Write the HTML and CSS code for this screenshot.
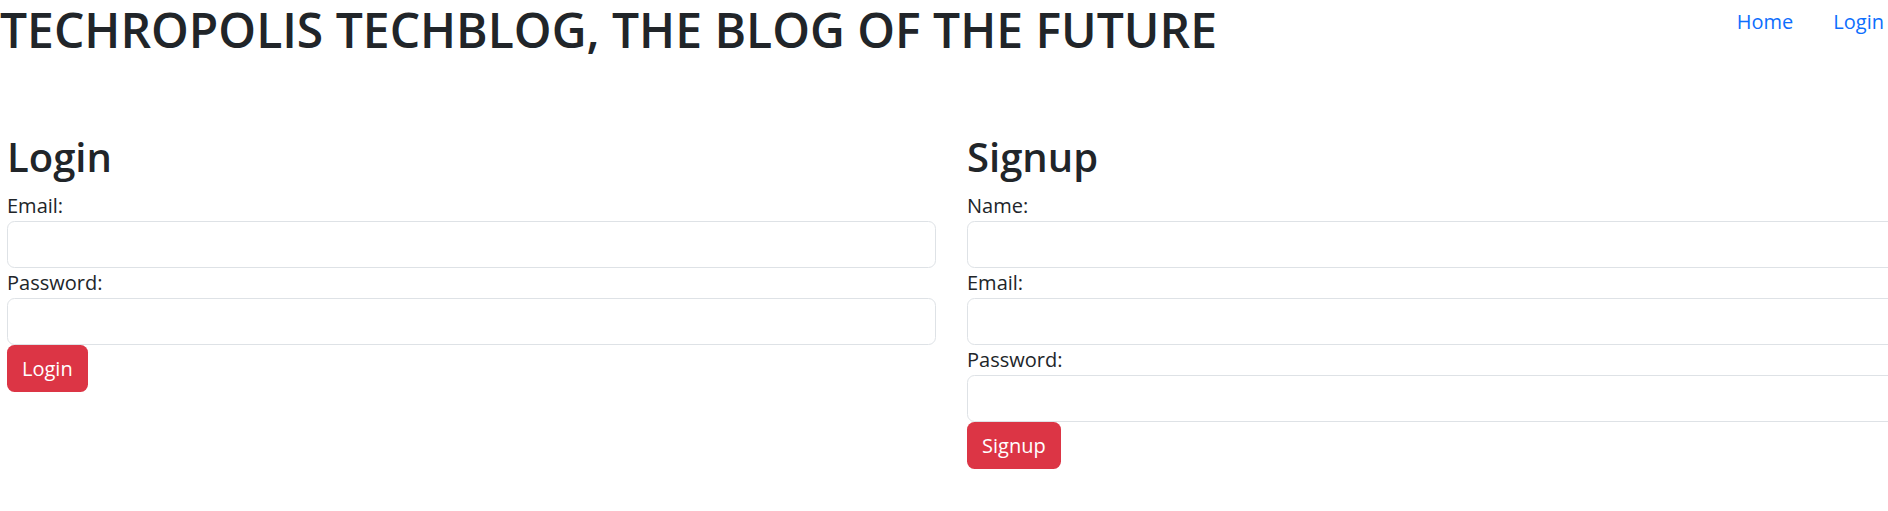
FILE: index.html
```html
<!DOCTYPE html>
<html lang="en">
<head>
<meta charset="utf-8">
<title>Techropolis Techblog</title>
<link rel="stylesheet" href="styles.css">
</head>
<body>
<div class="page">
  <header class="site-header">
    <h1 class="site-title">TECHROPOLIS TECHBLOG, THE BLOG OF THE FUTURE</h1>
    <nav class="nav">
      <a class="nav-link" href="#">Home</a>
      <a class="nav-link" href="#">Login</a>
    </nav>
  </header>
  <main class="forms">
    <section class="col">
      <h2 class="form-title">Login</h2>
      <form class="form">
        <label class="form-label" for="login-email">Email:</label>
        <input class="form-control" id="login-email" type="email">
        <label class="form-label" for="login-password">Password:</label>
        <input class="form-control" id="login-password" type="password">
        <button class="btn" type="button">Login</button>
      </form>
    </section>
    <section class="col">
      <h2 class="form-title">Signup</h2>
      <form class="form">
        <label class="form-label" for="signup-name">Name:</label>
        <input class="form-control" id="signup-name" type="text">
        <label class="form-label" for="signup-email">Email:</label>
        <input class="form-control" id="signup-email" type="email">
        <label class="form-label" for="signup-password">Password:</label>
        <input class="form-control" id="signup-password" type="password">
        <button class="btn" type="button">Signup</button>
      </form>
    </section>
  </main>
</div>
</body>
</html>
```

FILE: styles.css
```css
html, body {
  margin: 0;
  padding: 0;
  background: #fff;
  overflow: hidden;
}
body {
  font-family: "Open Sans", "Noto Sans", sans-serif;
  color: #212529;
  font-size: 20px;
  line-height: 1.5;
}
.page {
  width: 1920px;
}
.site-header {
  display: flex;
  justify-content: space-between;
  align-items: flex-start;
  padding-right: 16px;
}
.site-title {
  flex: none;
  margin: 0;
  font-size: 48px;
  font-weight: 600;
  line-height: 60px;
  letter-spacing: 0;
}
.nav {
  display: flex;
  padding-top: 7px;
}
.nav-link {
  display: block;
  padding: 0 20px;
  color: #0d6efd;
  text-decoration: none;
  font-size: 20px;
  line-height: 30px;
}
.forms {
  display: flex;
  gap: 31px;
  padding: 73px 0 0 7px;
}
.col {
  width: 929px;
  flex: none;
}
.form-title {
  margin: 0 0 10px;
  font-size: 40px;
  font-weight: 600;
  line-height: 48px;
}
.form {
  display: flex;
  flex-direction: column;
  align-items: flex-start;
}
.form-label {
  display: block;
  line-height: 30px;
}
.form-control {
  display: block;
  box-sizing: border-box;
  width: 100%;
  height: 47px;
  margin: 0;
  padding: 7.5px 15px;
  border: 1.25px solid #dee2e6;
  border-radius: 7.5px;
  font: inherit;
  background: #fff;
}
.btn {
  box-sizing: border-box;
  height: 47px;
  padding: 0 15px;
  border: 0;
  border-radius: 7.5px;
  background: #dc3545;
  color: #fff;
  font: inherit;
  line-height: 47px;
}
```
